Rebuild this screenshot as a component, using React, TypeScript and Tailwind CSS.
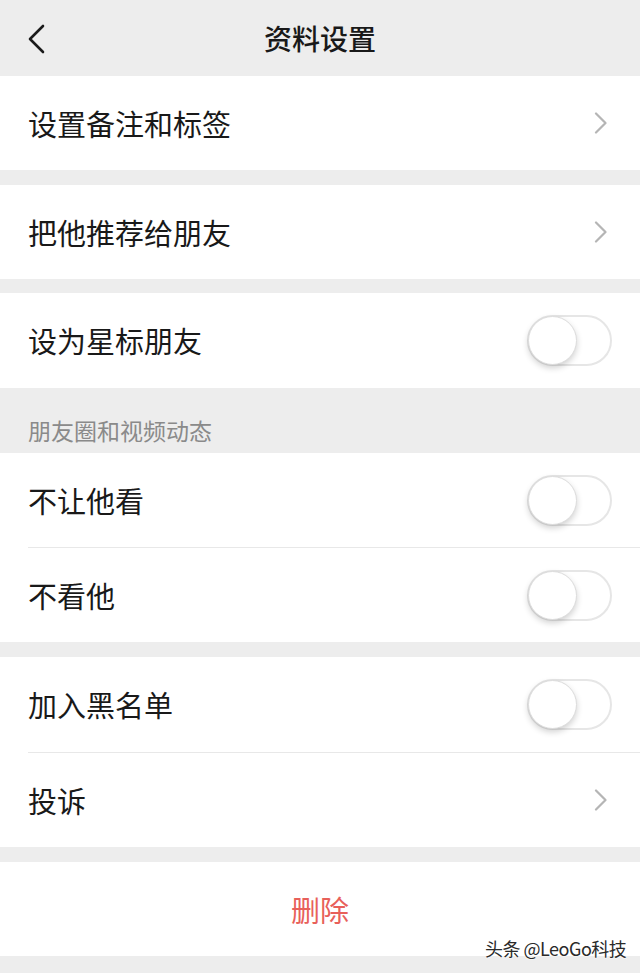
import React from "react";

const font = { fontFamily: '"Noto Sans CJK SC", "Noto Sans", sans-serif' };

const Chevron = () => (
  <svg width="14" height="22" viewBox="0 0 14 22" fill="none">
    <path d="M2 1.5 L11.5 11 L2 20.5" stroke="#b5b5b5" strokeWidth="2.2" strokeLinecap="round" strokeLinejoin="round" />
  </svg>
);

const Toggle = () => (
  <div className="relative w-[85px] h-[51px] rounded-full border-2 border-[#e6e6e6] bg-white">
    <div className="absolute left-[-1px] top-[-1px] w-[49px] h-[49px] rounded-full bg-white border border-[#dcdcdc] shadow-[0_3px_6px_rgba(0,0,0,0.18)]" />
  </div>
);

type RowProps = { label: string; right: "chevron" | "toggle" };

const Row = ({ label, right }: RowProps) => (
  <div className="h-[94px] bg-white flex items-center justify-between pl-7 pr-7">
    <span className="text-[29px] text-[#191919] leading-none">{label}</span>
    {right === "chevron" ? (
      <div className="pr-[4px]">
        <Chevron />
      </div>
    ) : (
      <Toggle />
    )}
  </div>
);

const Divider = () => (
  <div className="bg-white">
    <div className="ml-7 h-px bg-[#e8e8e8]" />
  </div>
);

const Gap = () => <div className="h-[15px]" />;

export default function App() {
  return (
    <div className="relative w-[640px] h-[973px] bg-[#ededed] overflow-hidden" style={font}>
      {/* header */}
      <div className="relative h-[76px] flex items-center justify-center">
        <svg className="absolute left-[26px] top-[24px]" width="22" height="30" viewBox="0 0 22 30" fill="none">
          <path d="M17 2 L4 15 L17 28" stroke="#1a1a1a" strokeWidth="2.6" strokeLinecap="round" strokeLinejoin="round" />
        </svg>
        <span className="text-[28px] font-medium text-[#191919] leading-none">资料设置</span>
      </div>

      <Row label="设置备注和标签" right="chevron" />
      <Gap />
      <Row label="把他推荐给朋友" right="chevron" />
      <div className="h-[14px]" />
      <div className="h-[95px] bg-white flex items-center justify-between pl-7 pr-7">
        <span className="text-[29px] text-[#191919] leading-none">设为星标朋友</span>
        <Toggle />
      </div>

      {/* section label */}
      <div className="h-[65px] flex items-center pl-7 pt-[20px]">
        <span className="text-[23px] text-[#8a8a8a] leading-none">朋友圈和视频动态</span>
      </div>

      <Row label="不让他看" right="toggle" />
      <Divider />
      <Row label="不看他" right="toggle" />
      <Gap />
      <div className="h-[95px] bg-white flex items-center justify-between pl-7 pr-7">
        <span className="text-[29px] text-[#191919] leading-none">加入黑名单</span>
        <Toggle />
      </div>
      <Divider />
      <Row label="投诉" right="chevron" />
      <Gap />

      {/* delete */}
      <div className="h-[94px] bg-white flex items-center justify-center">
        <span className="text-[29px] text-[#e8605a] leading-none">删除</span>
      </div>

      {/* watermark */}
      <div className="absolute left-[485px] top-[939px] text-[18px] text-[#2a2a2a] leading-none tracking-[-0.5px] [text-shadow:0_0_2px_#fff,0_0_2px_#fff]">
        头条 @LeoGo科技
      </div>
    </div>
  );
}
